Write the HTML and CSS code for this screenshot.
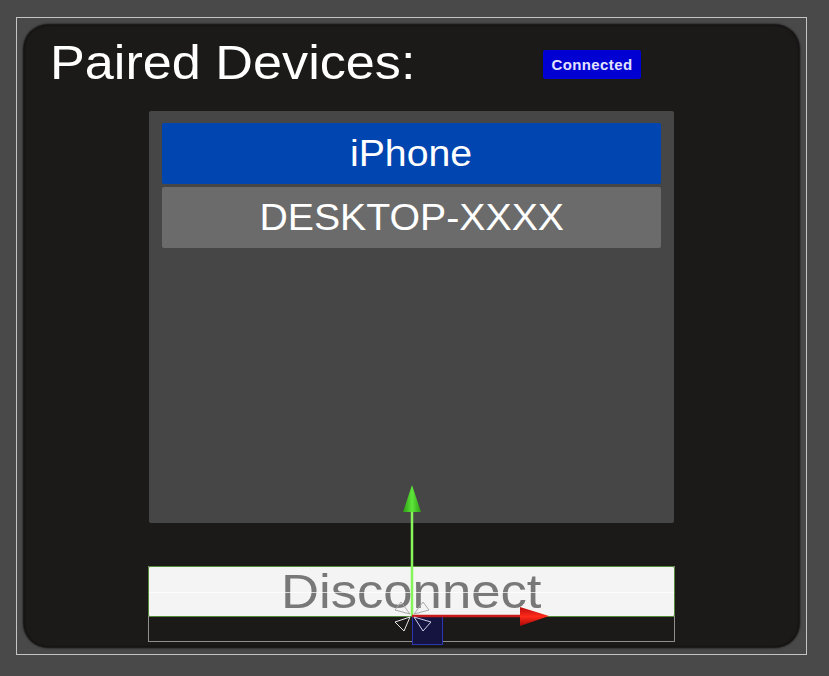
FILE: index.html
```html
<!DOCTYPE html>
<html>
<head>
<meta charset="utf-8">
<link rel="stylesheet" href="styles.css">
</head>
<body>
<div class="frame">
  <div class="panel">
    <div class="header">
      <h1 class="title"><span class="stretch">Paired Devices:</span></h1>
      <span class="badge">Connected</span>
    </div>
    <div class="list">
      <div class="item item-active"><span class="stretch-i">iPhone</span></div>
      <div class="item"><span class="stretch-i">DESKTOP-XXXX</span></div>
    </div>
    <div class="button-wrap">
      <div class="button"><span class="button-label stretch-c">Disconnect</span><span class="centerline"></span></div>
      <svg class="gizmo" width="200" height="180" viewBox="0 0 200 180">
        <defs>
          <linearGradient id="gh" x1="0" x2="1" y1="0" y2="0">
            <stop offset="0" stop-color="#2a9a12"/>
            <stop offset="0.5" stop-color="#5ee63a"/>
            <stop offset="1" stop-color="#2f9f16"/>
          </linearGradient>
          <linearGradient id="rh" x1="0" x2="0" y1="0" y2="1">
            <stop offset="0" stop-color="#b80c0c"/>
            <stop offset="0.5" stop-color="#ff2a1a"/>
            <stop offset="1" stop-color="#a80808"/>
          </linearGradient>
        </defs>
        <rect x="33.5" y="140.5" width="30" height="28" fill="#15133f" stroke="#2b37b2" stroke-width="1"/>
        <line x1="33" y1="140" x2="33" y2="34" stroke="#86f55a" stroke-width="2.5"/>
        <polygon points="33,9 24,36 42,36" fill="url(#gh)"/>
        <line x1="33" y1="140" x2="144" y2="140" stroke="#c81c1c" stroke-width="2.5"/>
        <polygon points="170,140 141,131 141,150" fill="url(#rh)"/>
        <g fill="none" stroke-width="1" stroke-linejoin="round">
          <polygon points="31,141 16,146 25,155" stroke="#e6e6e6"/>
          <polygon points="35,141 52,146 44,155" stroke="#d0d0e8"/>
          <polygon points="31,138 22,126 16,134" stroke="#a8a8a8"/>
          <polygon points="35,138 44,126 50,134" stroke="#a8a8a8"/>
        </g>
      </svg>
    </div>
  </div>
</div>
</body>
</html>
```

FILE: styles.css
```css
html, body {
  margin: 0;
  padding: 0;
}

body {
  width: 829px;
  height: 676px;
  background: #494949;
  font-family: "Liberation Sans", Arial, sans-serif;
  overflow: hidden;
}

.frame {
  margin: 17px 0 0 16px;
  width: 775px;
  height: 622px;
  padding: 7px;
  border: 1px solid #c4c4c4;
}

.panel {
  width: 775px;
  height: 622px;
  background: #1c1a19;
  border-radius: 24px;
  box-shadow: 0 0 2px 1px #0c0b0b, inset 0 0 2px #0c0b0b;
  display: flex;
  flex-direction: column;
  align-items: center;
}

.header {
  align-self: stretch;
  display: flex;
  align-items: flex-start;
  padding: 9px 0 0 26px;
  height: 56px;
}

.title {
  margin: 0;
  font-weight: normal;
  font-size: 49px;
  line-height: 56px;
  color: #ffffff;
  white-space: nowrap;
}

.stretch {
  display: inline-block;
  transform: scaleX(1.065);
  transform-origin: left center;
}

.stretch-c {
  display: inline-block;
  transform: scaleX(1.075);
  transform-origin: center center;
}

.stretch-i {
  display: inline-block;
  transform: scaleX(1.09);
  transform-origin: center center;
}

.badge {
  margin: 16px 158px 0 auto;
  width: 98px;
  height: 29px;
  background: #0000d2;
  border-radius: 2px;
  color: #e2e2ff;
  font-weight: bold;
  font-size: 15px;
  letter-spacing: 0.4px;
  display: flex;
  align-items: center;
  justify-content: center;
}

.list {
  margin-top: 21px;
  width: 525px;
  height: 412px;
  box-sizing: border-box;
  padding: 12px 13px;
  background: #474646;
  border-radius: 2px;
  display: flex;
  flex-direction: column;
  gap: 3px;
}

.item {
  height: 61px;
  border-radius: 2px;
  background: #6b6b6b;
  color: #ffffff;
  font-size: 36px;
  display: flex;
  align-items: center;
  justify-content: center;
}

.item-active {
  background: #0045b0;
}

.button-wrap {
  position: relative;
  margin-top: 43px;
  width: 527px;
  height: 76px;
  box-sizing: border-box;
  border: 1px solid #8e8e8e;
  border-top: none;
}

.button {
  position: relative;
  margin-left: -1px;
  width: 527px;
  height: 51px;
  box-sizing: border-box;
  background: #f4f4f4;
  border: 1px solid #558a3a;
  border-radius: 2px;
  display: flex;
  align-items: center;
  justify-content: center;
}

.button-label {
  font-size: 49px;
  color: #787878;
  line-height: 49px;
}

.centerline {
  position: absolute;
  left: 0;
  right: 0;
  top: 25px;
  height: 1px;
  background: rgba(255, 255, 255, 0.7);
}

.gizmo {
  position: absolute;
  left: 230px;
  top: -90px;
}
```
